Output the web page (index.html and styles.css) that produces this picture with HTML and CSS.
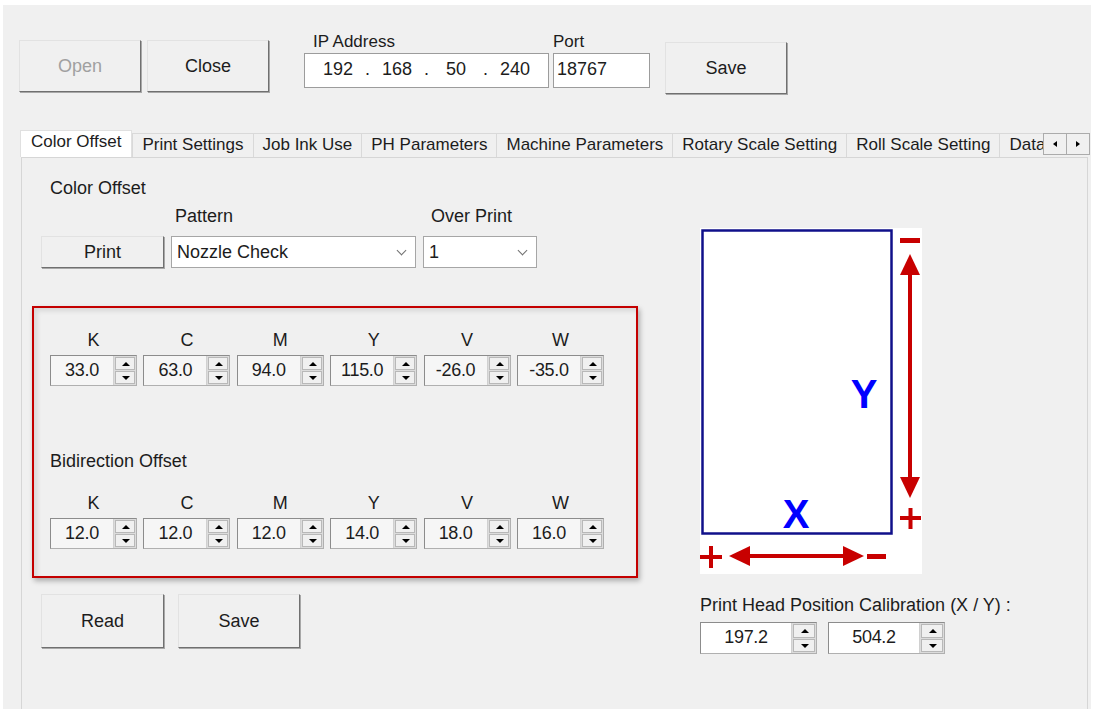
FILE: index.html
```html
<!DOCTYPE html>
<html lang="en">
<head>
	<meta charset="UTF-8">
	<title>Color Offset</title>
	<link rel="stylesheet" href="styles.css">
</head>
<body>
	<div class="window">
		<div class="toolbar">
			<button class="btn btn-lg disabled">Open</button>
			<button class="btn btn-lg close-btn">Close</button>
			<div class="field ip-field">
				<label>IP Address</label>
				<div class="textbox ip">
					<span class="oct">192</span><span class="dot">.</span>
					<span class="oct">168</span><span class="dot">.</span>
					<span class="oct">50</span><span class="dot">.</span>
					<span class="oct">240</span>
				</div>
			</div>
			<div class="field port-field">
				<label>Port</label>
				<div class="textbox port">18767</div>
			</div>
			<button class="btn btn-lg save-top">Save</button>
		</div>

		<div class="tabbar">
			<div class="tablist">
				<span class="tab active">Color Offset</span>
				<span class="tab">Print Settings</span>
				<span class="tab">Job Ink Use</span>
				<span class="tab">PH Parameters</span>
				<span class="tab">Machine Parameters</span>
				<span class="tab">Rotary Scale Setting</span>
				<span class="tab">Roll Scale Setting</span>
				<span class="tab">Data Settings</span>
			</div>
			<div class="tab-arrows">
				<span class="tab-arrow tab-prev"></span>
				<span class="tab-arrow tab-next"></span>
			</div>
		</div>

		<div class="panel">
			<div class="col-left">
				<p class="title">Color Offset</p>
				<div class="pattern-grid">
					<span></span>
					<span class="lbl lbl-pattern">Pattern</span>
					<span class="lbl lbl-over">Over Print</span>
					<button class="btn btn-print">Print</button>
					<div class="select">
						<span>Nozzle Check</span>
						<i class="chev"></i>
					</div>
					<div class="select">
						<span>1</span>
						<i class="chev"></i>
					</div>
				</div>

				<div class="offset-box">
					<div class="spin-grid">
						<span class="col-lbl">K</span>
						<span class="col-lbl">C</span>
						<span class="col-lbl">M</span>
						<span class="col-lbl">Y</span>
						<span class="col-lbl">V</span>
						<span class="col-lbl">W</span>
						<div class="spin"><span class="val">33.0</span><span class="arrows"><b class="up"></b><b class="down"></b></span></div>
						<div class="spin"><span class="val">63.0</span><span class="arrows"><b class="up"></b><b class="down"></b></span></div>
						<div class="spin"><span class="val">94.0</span><span class="arrows"><b class="up"></b><b class="down"></b></span></div>
						<div class="spin"><span class="val">115.0</span><span class="arrows"><b class="up"></b><b class="down"></b></span></div>
						<div class="spin"><span class="val">-26.0</span><span class="arrows"><b class="up"></b><b class="down"></b></span></div>
						<div class="spin"><span class="val">-35.0</span><span class="arrows"><b class="up"></b><b class="down"></b></span></div>
					</div>

					<p class="sub-title">Bidirection Offset</p>

					<div class="spin-grid">
						<span class="col-lbl">K</span>
						<span class="col-lbl">C</span>
						<span class="col-lbl">M</span>
						<span class="col-lbl">Y</span>
						<span class="col-lbl">V</span>
						<span class="col-lbl">W</span>
						<div class="spin"><span class="val">12.0</span><span class="arrows"><b class="up"></b><b class="down"></b></span></div>
						<div class="spin"><span class="val">12.0</span><span class="arrows"><b class="up"></b><b class="down"></b></span></div>
						<div class="spin"><span class="val">12.0</span><span class="arrows"><b class="up"></b><b class="down"></b></span></div>
						<div class="spin"><span class="val">14.0</span><span class="arrows"><b class="up"></b><b class="down"></b></span></div>
						<div class="spin"><span class="val">18.0</span><span class="arrows"><b class="up"></b><b class="down"></b></span></div>
						<div class="spin"><span class="val">16.0</span><span class="arrows"><b class="up"></b><b class="down"></b></span></div>
					</div>
				</div>

				<div class="bottom-btns">
					<button class="btn btn-read">Read</button>
					<button class="btn btn-save">Save</button>
				</div>
			</div>

			<div class="col-right">
				<svg class="diagram" width="222" height="346" viewBox="0 0 222 346">
					<rect x="0" y="0" width="222" height="346" fill="#fff"/>
					<rect x="2.5" y="2.5" width="189" height="303" fill="#fff" stroke="#10108a" stroke-width="2.5"/>
					<text x="164" y="180" font-family="Liberation Sans, Arial, sans-serif" font-size="40" font-weight="bold" fill="#0000ff" text-anchor="middle">Y</text>
					<text x="96" y="300" font-family="Liberation Sans, Arial, sans-serif" font-size="40" font-weight="bold" fill="#0000ff" text-anchor="middle">X</text>
					<!-- vertical arrow -->
					<line x1="210" y1="44" x2="210" y2="252" stroke="#c80000" stroke-width="4"/>
					<polygon points="200,47 210,26 220,47" fill="#c80000"/>
					<polygon points="200,249 210,270 220,249" fill="#c80000"/>
					<rect x="200" y="10" width="20" height="5" fill="#c80000"/>
					<rect x="200" y="288" width="21" height="4" fill="#c80000"/>
					<rect x="208.5" y="280" width="4" height="21" fill="#c80000"/>
					<!-- horizontal arrow -->
					<line x1="47" y1="328" x2="146" y2="328" stroke="#c80000" stroke-width="4"/>
					<polygon points="50,318 29,328 50,338" fill="#c80000"/>
					<polygon points="143,318 164,328 143,338" fill="#c80000"/>
					<rect x="0" y="327" width="22" height="4" fill="#c80000"/>
					<rect x="9" y="318" width="4" height="22" fill="#c80000"/>
					<rect x="167" y="326" width="19" height="5" fill="#c80000"/>
				</svg>
				<p class="calib-lbl">Print Head Position Calibration (X / Y) :</p>
				<div class="calib-row">
					<div class="spin spin-white"><span class="val">197.2</span><span class="arrows"><b class="up"></b><b class="down"></b></span></div>
					<div class="spin spin-white"><span class="val">504.2</span><span class="arrows"><b class="up"></b><b class="down"></b></span></div>
				</div>
			</div>
		</div>
	</div>
</body>
</html>
```
FILE: styles.css
```css
*{
	margin: 0;
	padding: 0;
	box-sizing: border-box;
}
html,body{
	height: 100%;
}
body{
	background: #fff;
	font-family: "Liberation Sans", Arial, sans-serif;
	font-size: 18px;
	color: #1c1c1c;
	overflow: hidden;
}
.window{
	background: #f0f0f0;
	margin: 5px 2px 0 3px;
	height: 704px;
	padding: 28px 0 0 16px;
	display: flex;
	flex-direction: column;
}

/* buttons */
.btn{
	font: inherit;
	color: #1c1c1c;
	background: #f0f0f0;
	border: 1px solid;
	border-color: #e2e2e2 #707070 #707070 #e2e2e2;
	box-shadow: 1px 1px 0 #a8a8a8;
}
.btn.disabled{
	color: #a0a0a0;
}
.btn-lg{
	width: 122px;
	height: 52px;
	margin-top: 7px;
}

/* top bar */
.toolbar{
	display: flex;
	align-items: flex-start;
}
.close-btn{
	margin-left: 6px;
}
.field label{
	display: block;
	height: 20px;
	line-height: 18px;
	font-size: 17px;
}
.ip-field{
	margin-left: 35px;
}
.ip-field label{
	padding-left: 9px;
}
.port-field{
	margin-left: 4px;
}
.textbox{
	height: 35px;
	background: #fff;
	border: 1px solid #9c9c9c;
	line-height: 31px;
}
.ip{
	width: 245px;
	display: flex;
	padding-left: 15px;
}
.ip .oct{
	width: 36px;
	text-align: center;
}
.ip .dot{
	width: 23px;
	text-align: center;
}
.port{
	width: 97px;
	padding-left: 3px;
}
.save-top{
	margin-left: 15px;
	margin-top: 9px;
}

/* tabs */
.tabbar{
	display: grid;
	grid-template-columns: 1023px 48px;
	align-items: end;
	margin: 36px 0 0 1px;
	height: 27px;
	position: relative;
	z-index: 1;
	font-size: 17px;
}
.tablist{
	display: flex;
	align-items: flex-end;
	height: 27px;
	overflow: hidden;
}
.tab{
	flex: none;
	height: 24px;
	line-height: 22px;
	padding: 0 9px;
	border: 1px solid #d9d9d9;
	border-bottom: none;
	margin-left: -1px;
	white-space: nowrap;
}
.tab.active{
	height: 27px;
	line-height: 22px;
	margin-left: 0;
	padding: 0 10px;
	background: #fff;
	border-color: #e0e0e0;
}
.tab.active + .tab{
	margin-left: 0;
}
.tab-arrows{
	display: flex;
	height: 22px;
	margin-bottom: 2px;
}
.tab-arrow{
	flex: none;
	width: 24px;
	height: 22px;
	background: #f0f0f0;
	border: 1px solid #ababab;
	position: relative;
}
.tab-arrow + .tab-arrow{
	margin-left: -1px;
}
.tab-arrow::after{
	content: "";
	position: absolute;
	top: 7px;
	left: 9px;
	border-top: 3.5px solid transparent;
	border-bottom: 3.5px solid transparent;
}
.tab-prev::after{
	border-right: 4px solid #000;
}
.tab-next::after{
	border-left: 4px solid #000;
}

/* panel */
.panel{
	flex: 1;
	width: 1067px;
	margin-left: 2px;
	border: 1px solid #d6d6d6;
	border-bottom: none;
	display: flex;
}
.col-left{
	margin-left: 10px;
	width: 606px;
}
.title{
	margin: 20px 0 0 18px;
	line-height: 20px;
}
.pattern-grid{
	display: grid;
	grid-template-columns: 123px 245px 114px;
	grid-template-rows: 20px 32px;
	column-gap: 7px;
	row-gap: 10px;
	margin: 8px 0 0 9px;
	line-height: 20px;
}
.lbl-pattern{
	padding-left: 4px;
}
.lbl-over{
	padding-left: 8px;
}
.btn-print{
	height: 32px;
}
.select{
	display: flex;
	align-items: center;
	justify-content: space-between;
	background: #fff;
	border: 1px solid #a6a6a6;
	padding: 0 10px 0 5px;
}
.chev{
	width: 7px;
	height: 7px;
	border-right: 1.3px solid #707070;
	border-bottom: 1.3px solid #707070;
	transform: rotate(45deg);
	margin-top: -4px;
}

/* offsets */
.offset-box{
	margin-top: 38px;
	height: 272px;
	border: 2px solid #c40000;
	padding: 22px 0 0 16px;
	box-shadow: inset 3px 3px 5px rgba(0,0,0,.10), 2px 3px 5px rgba(0,0,0,.28);
}
.spin-grid{
	display: grid;
	grid-template-columns: repeat(6, 87px);
	column-gap: 6.4px;
	row-gap: 5px;
}
.col-lbl{
	text-align: center;
	line-height: 20px;
}
.sub-title{
	margin-top: 65px;
	margin-bottom: 22px;
	line-height: 20px;
}
.spin{
	display: flex;
	height: 31px;
	background: #f6f6f6;
	border: 1px solid #b0b0b0;
	border-top-color: #8c8c8c;
	border-left-color: #8c8c8c;
}
.spin .val{
	flex: 1;
	text-align: center;
	line-height: 29px;
	letter-spacing: -0.3px;
}
.spin .arrows{
	width: 23px;
	display: flex;
	flex-direction: column;
	padding: 1px;
	background: #dcdcdc;
	border-left: 1px solid #d0d0d0;
}
.spin .arrows b{
	flex: 1;
	position: relative;
	background: #f0f0f0;
	border: 1px solid #b8b8b8;
}
.spin .arrows b + b{
	margin-top: 1px;
}
.spin .arrows b::after{
	content: "";
	position: absolute;
	left: 6px;
	top: 4px;
	border-left: 4px solid transparent;
	border-right: 4px solid transparent;
}
.spin .arrows .up::after{
	border-bottom: 4px solid #000;
}
.spin .arrows .down::after{
	border-top: 4px solid #000;
}
.bottom-btns{
	display: flex;
	margin: 16px 0 0 9px;
}
.btn-read,.btn-save{
	height: 54px;
	width: 123px;
}
.btn-save{
	width: 122px;
	margin-left: 14px;
}

/* right side */
.col-right{
	margin-left: 62px;
}
.diagram{
	display: block;
	margin-top: 70px;
}
.calib-lbl{
	margin-top: 21px;
	line-height: 20px;
	white-space: nowrap;
}
.calib-row{
	display: flex;
	gap: 11px;
	margin-top: 7px;
}
.spin-white{
	width: 117px;
	height: 32px;
	background: #fff;
}
.spin-white .arrows{
	width: 25px;
}
.spin-white .arrows b::after{
	left: 7px;
}
```
